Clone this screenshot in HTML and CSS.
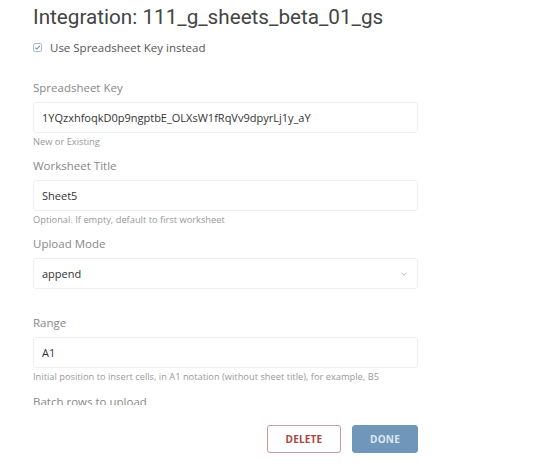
FILE: index.html
```html
<!DOCTYPE html>
<html>
<head>
<meta charset="utf-8">
<link rel="stylesheet" href="styles.css">
</head>
<body>
<div class="modal">
  <h1 class="title">Integration: 111_g_sheets_beta_01_gs</h1>
  <label class="check-row">
    <span class="checkbox">
      <svg width="9" height="9" viewBox="0 0 9 9"><rect x="0.5" y="0.5" width="8" height="8" rx="1.5" fill="#fff" stroke="#a9bccf"/><path d="M2.2 4.6 L3.8 6.1 L6.9 2.9" fill="none" stroke="#6d8fb0" stroke-width="1.1"/></svg>
    </span>
    <span>Use Spreadsheet Key instead</span>
  </label>
  <div class="form">
    <div class="field">
      <div class="label">Spreadsheet Key</div>
      <div class="input">1YQzxhfoqkD0p9ngptbE_OLXsW1fRqVv9dpyrLj1y_aY</div>
      <div class="help">New or Existing</div>
    </div>
    <div class="field">
      <div class="label">Worksheet Title</div>
      <div class="input">Sheet5</div>
      <div class="help">Optional. If empty, default to first worksheet</div>
    </div>
    <div class="field field-select">
      <div class="label">Upload Mode</div>
      <div class="input select"><span>append</span>
        <svg class="chev" width="6" height="4" viewBox="0 0 6 4"><path d="M0.5 0.8 L3 3.2 L5.5 0.8" fill="none" stroke="#b5b5b5" stroke-width="0.9"/></svg>
      </div>
    </div>
    <div class="field">
      <div class="label">Range</div>
      <div class="input">A1</div>
      <div class="help">Initial position to insert cells, in A1 notation (without sheet title), for example, B5</div>
    </div>
    <div class="field field-last">
      <div class="label">Batch rows to upload</div>
    </div>
  </div>
  <div class="actions">
    <button class="btn btn-delete">DELETE</button>
    <button class="btn btn-done">DONE</button>
  </div>
</div>
</body>
</html>
```

FILE: styles.css
```css
html, body {
  margin: 0;
  padding: 0;
  background: #fff;
}
body {
  width: 544px;
  height: 475px;
  overflow: hidden;
  font-family: "Open Sans", "Liberation Sans", sans-serif;
}
.modal {
  padding: 0 126px 0 33px;
}
.title {
  margin: 0;
  padding-top: 4px;
  font-family: Roboto, "Liberation Sans", sans-serif;
  font-weight: 400;
  font-size: 20.7px;
  line-height: 26px;
  color: #444;
  white-space: nowrap;
}
.check-row {
  display: flex;
  align-items: center;
  gap: 8px;
  margin-top: 10px;
  height: 14px;
  font-size: 11.5px;
  color: #555;
}
.checkbox {
  display: flex;
  width: 9px;
  height: 9px;
}
.form {
  height: 351px;
  overflow: hidden;
  padding-top: 26px;
  box-sizing: border-box;
}
.field {
  margin-bottom: 10px;
}
.field-select {
  margin-bottom: 26px;
}
.field-last {
  padding-top: 1px;
}
.label {
  font-size: 11.5px;
  line-height: 16px;
  color: #888;
  margin-bottom: 6px;
}
.input {
  height: 31px;
  box-sizing: border-box;
  border: 1px solid #efefef;
  border-radius: 3px;
  padding: 0 8px;
  display: flex;
  align-items: center;
  font-size: 11px;
  color: #333;
}
.select {
  justify-content: space-between;
  padding-right: 10px;
}
.help {
  margin-top: 3px;
  font-size: 9.3px;
  line-height: 12px;
  color: #999;
  white-space: nowrap;
}
.actions {
  display: flex;
  justify-content: flex-end;
  gap: 11px;
  margin-top: 20px;
}
.btn {
  height: 28px;
  box-sizing: border-box;
  border-radius: 3px;
  font-family: "Open Sans", "Liberation Sans", sans-serif;
  font-weight: 700;
  font-size: 10px;
  letter-spacing: 0.2px;
  padding: 0;
}
.btn-delete {
  width: 74px;
  background: #fff;
  border: 1px solid #c99a9a;
  color: #a54444;
}
.btn-done {
  width: 66px;
  background: #7097b9;
  border: 1px solid #7097b9;
  color: #dfe7ef;
}
```
